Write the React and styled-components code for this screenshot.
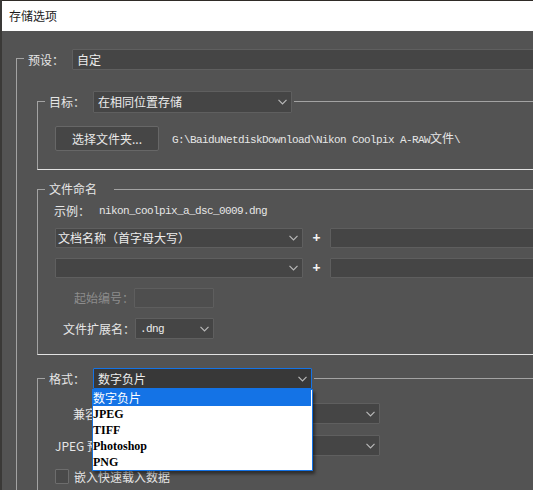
import React from 'react';
import styled, { createGlobalStyle } from 'styled-components';

const UI = `"Noto Sans CJK SC", "Noto Sans", sans-serif`;
const MONO = `"Liberation Mono", "Noto Sans CJK SC", monospace`;
const SERIF = `"Liberation Serif", "Noto Sans CJK SC", serif`;
const LINE = '#a3a3a3';
const LIGHT = '#e2e2e2';
const BLUE = '#1473e6';

const Global = createGlobalStyle`
  html, body { margin: 0; padding: 0; background: #535353; }
  body { font-family: ${UI}; }
  * { box-sizing: border-box; }
`;

const Window = styled.div`
  width: 533px;
  height: 490px;
  overflow: hidden;
  background: #535353;
  border-left: 2px solid #3a3937;
  color: #e6e6e6;
  font: 12px/16px ${UI};
`;

const TitleBar = styled.div`
  height: 31px;
  border-top: 1px solid #2f2b27;
  background: #ffffff;
  color: #1b1b1b;
  display: flex;
  align-items: center;
  padding-left: 7px;
  font-size: 12px;
`;

const Body = styled.div`
  width: 640px;
  padding: 18px 0 0 14px;
`;

const Group = styled.section`
  display: flex;
  flex-direction: column;
  align-self: stretch;
  margin-top: ${(p) => p.$mt || 0}px;
`;

const Head = styled.div`
  display: flex;
  align-items: center;
  height: ${(p) => p.$h}px;
`;

const Stub = styled.span`
  flex: none;
  align-self: stretch;
  width: 8px;
  margin-top: ${(p) => p.$off}px;
  border-top: 1px solid ${LINE};
  border-left: 1px solid ${LINE};
`;

const HeadLabel = styled.span`
  flex: none;
  margin-left: 4px;
  width: ${(p) => p.$w}px;
  white-space: nowrap;
`;

const HeadRule = styled.span`
  flex: 1;
  align-self: flex-start;
  margin-top: ${(p) => p.$off}px;
  margin-left: ${(p) => p.$ml || 0}px;
  height: 1px;
  background: ${LINE};
`;

const GroupBody = styled.div`
  display: flex;
  flex-direction: column;
  align-items: flex-start;
  border-left: 1px solid ${LINE};
  border-bottom: ${(p) => (p.$closed ? `1px solid ${LIGHT}` : 'none')};
  padding: ${(p) => p.$pad};
`;

const SelectBox = styled.div`
  position: relative;
  flex: ${(p) => (p.$w ? 'none' : '1')};
  width: ${(p) => (p.$w ? `${p.$w}px` : 'auto')};
  height: ${(p) => p.$h || 20}px;
  display: flex;
  align-items: center;
  justify-content: space-between;
  padding: 0 4px 0 ${(p) => p.$pl ?? 4}px;
  background: ${(p) => (p.$focus ? '#383838' : '#454545')};
  border: 1px solid ${(p) => (p.$focus ? BLUE : '#5f5f5f')};
  border-radius: 1px;
  color: #ececec;
  white-space: nowrap;
`;

const SelectValue = styled.span`
  font-family: ${(p) => (p.$mono ? MONO : UI)};
  letter-spacing: ${(p) => (p.$mono ? '-0.6px' : '0')};
  font-size: ${(p) => (p.$mono ? '11px' : '12px')};
`;

const Chevron = () => (
  <svg width="9" height="6" viewBox="0 0 9 6" style={{ flex: 'none', marginLeft: 'auto' }}>
    <polyline points="0.5,0.8 4.5,4.8 8.5,0.8" fill="none" stroke="#b8b8b8" strokeWidth="1.2" />
  </svg>
);

const Select = ({ value, w, h, pl, focus, mono, noChevron, children }) => (
  <SelectBox $w={w} $h={h} $pl={pl} $focus={focus}>
    {value ? <SelectValue $mono={mono}>{value}</SelectValue> : null}
    {!noChevron && <Chevron />}
    {children}
  </SelectBox>
);

const Field = styled.div`
  flex: ${(p) => (p.$w ? 'none' : '1')};
  width: ${(p) => (p.$w ? `${p.$w}px` : 'auto')};
  height: ${(p) => p.$h || 20}px;
  background: ${(p) => (p.$disabled ? '#4e4e4e' : '#454545')};
  border: 1px solid #5e5e5e;
  border-radius: 1px;
`;

const Button = styled.div`
  flex: none;
  width: 104px;
  height: 25px;
  display: flex;
  align-items: center;
  justify-content: center;
  background: #464646;
  border: 1px solid #676767;
  border-radius: 2px;
  color: #e8e8e8;
`;

const Row = styled.div`
  display: flex;
  align-items: center;
  width: 100%;
  margin-top: ${(p) => p.$mt || 0}px;
  height: ${(p) => p.$h || 20}px;
  padding-left: ${(p) => p.$pl || 0}px;
`;

const FormRow = styled.div`
  display: grid;
  grid-template-columns: ${(p) => p.$cols};
  column-gap: ${(p) => p.$gap || 0}px;
  align-items: center;
  margin-top: ${(p) => p.$mt || 0}px;
  height: ${(p) => p.$h || 20}px;
  padding-left: ${(p) => p.$pl || 0}px;
`;

const FormLabel = styled.span`
  text-align: right;
  white-space: nowrap;
  color: ${(p) => (p.$disabled ? '#8d8d8d' : '#e6e6e6')};
`;

const Mono = styled.span`
  font-family: ${MONO};
  font-size: 11px;
  letter-spacing: -0.6px;
  margin-left: ${(p) => p.$ml || 0}px;
  white-space: nowrap;
`;

const Cjk = styled.span`
  font-family: ${UI};
  font-size: 12px;
  letter-spacing: 0;
`;

const Plus = styled.span`
  flex: none;
  width: 27px;
  text-align: center;
  font: 700 14px/16px "Noto Sans", sans-serif;
  color: #f2f2f2;
`;

const List = styled.ul`
  position: absolute;
  left: -2px;
  top: calc(100% + 1px);
  width: 221px;
  margin: 0;
  padding: 0 1px 0 0;
  list-style: none;
  background: #ffffff;
  border: 1px solid ${BLUE};
  box-shadow: 2px 3px 3px rgba(0, 0, 0, 0.45);
  z-index: 2;
`;

const Item = styled.li`
  height: 16px;
  display: flex;
  align-items: center;
  background: ${(p) => (p.$sel ? BLUE : '#ffffff')};
  color: ${(p) => (p.$sel ? '#ffffff' : '#000000')};
  font-family: ${(p) => (p.$cjk ? UI : SERIF)};
  font-size: 12px;
  font-weight: ${(p) => (p.$cjk ? 400 : 700)};
`;

const CheckRow = styled.label`
  display: flex;
  align-items: center;
  gap: 5px;
  margin-top: 13px;
  height: 15px;
`;

const CheckBox = styled.span`
  width: 14px;
  height: 15px;
  background: #4a4a4a;
  border: 1px solid #6d6d6d;
  border-radius: 1px;
`;

const formats = ['数字负片', 'JPEG', 'TIFF', 'Photoshop', 'PNG'];

export default function App() {
  return (
    <>
      <Global />
      <Window>
        <TitleBar>存储选项</TitleBar>
        <Body>
          <Group>
            <Head $h={21}>
              <Stub $off={9} />
              <HeadLabel $w={44}>预设：</HeadLabel>
              <Select value="自定" h={21} noChevron />
            </Head>
            <GroupBody $pad="21px 0 40px 20px">
              <Group>
                <Head $h={22}>
                  <Stub $off={10} />
                  <HeadLabel $w={44}>目标：</HeadLabel>
                  <Select value="在相同位置存储" w={199} h={22} />
                  <HeadRule $off={10} $ml={2} />
                </Head>
                <GroupBody $closed $pad="13px 0 18px 17px">
                  <Row $h={25}>
                    <Button>选择文件夹...</Button>
                    <Mono $ml={13}>
                      G:\BaiduNetdiskDownload\Nikon Coolpix A-RAW<Cjk>文件</Cjk>\
                    </Mono>
                  </Row>
                </GroupBody>
              </Group>

              <Group $mt={11}>
                <Head $h={16}>
                  <Stub $off={8} />
                  <HeadLabel $w={65}>文件命名</HeadLabel>
                  <HeadRule $off={8} />
                </Head>
                <GroupBody $closed $pad="6px 0 15px 16px">
                  <Row $h={16}>
                    <span>示例：</span>
                    <Mono $ml={9}>nikon_coolpix_a_dsc_0009.dng</Mono>
                  </Row>
                  <Row $mt={9} $pl={1}>
                    <Select value="文档名称（首字母大写）" w={248} pl={2} />
                    <Plus>+</Plus>
                    <Field />
                  </Row>
                  <Row $mt={10} $pl={1}>
                    <Select value="" w={248} />
                    <Plus>+</Plus>
                    <Field />
                  </Row>
                  <FormRow $mt={10} $cols="79px 80px" $pl={1}>
                    <FormLabel $disabled>起始编号：</FormLabel>
                    <Field $disabled />
                  </FormRow>
                  <FormRow $mt={10} $h={21} $cols="80px 79px" $pl={1}>
                    <FormLabel>文件扩展名：</FormLabel>
                    <Select value=".dng" w={79} h={21} mono />
                  </FormRow>
                </GroupBody>
              </Group>

              <Group $mt={13}>
                <Head $h={21}>
                  <Stub $off={10} />
                  <HeadLabel $w={44}>格式：</HeadLabel>
                  <Select value="数字负片" w={219} h={21} focus>
                    <List>
                      {formats.map((f, i) => (
                        <Item key={f} $sel={i === 0} $cjk={i === 0}>
                          {f}
                        </Item>
                      ))}
                    </List>
                  </Select>
                  <HeadRule $off={10} $ml={2} />
                </Head>
                <GroupBody $pad="14px 0 20px 17px">
                  <FormRow $h={21} $cols="66px 252px" $gap={7}>
                    <FormLabel>兼容性：</FormLabel>
                    <Select value="" w={252} h={21} />
                  </FormRow>
                  <FormRow $mt={11} $h={21} $cols="66px 252px" $gap={7}>
                    <FormLabel>JPEG 预览：</FormLabel>
                    <Select value="" w={252} h={21} />
                  </FormRow>
                  <CheckRow>
                    <CheckBox />
                    <span>嵌入快速载入数据</span>
                  </CheckRow>
                </GroupBody>
              </Group>
            </GroupBody>
          </Group>
        </Body>
      </Window>
    </>
  );
}
